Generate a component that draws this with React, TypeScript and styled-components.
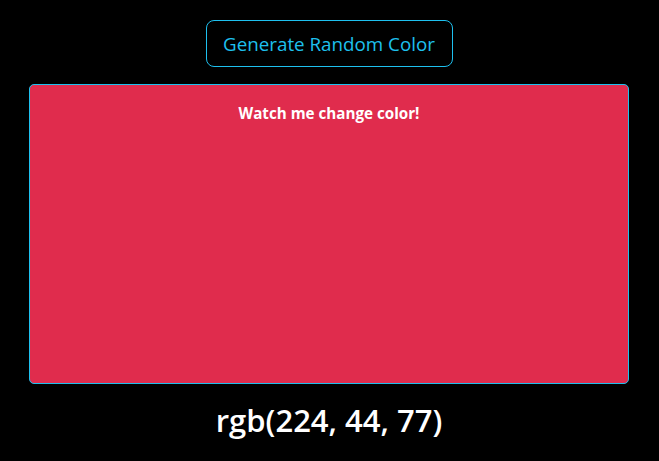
import React from "react";
import styled, { createGlobalStyle } from "styled-components";

const Global = createGlobalStyle`
  html, body { margin: 0; padding: 0; background: #000; }
  body { font-family: "Open Sans", "Noto Sans", sans-serif; color: #fff; }
`;

const Page = styled.div`
  display: flex;
  flex-direction: column;
  align-items: center;
  padding-top: 20px;
  padding-right: 1px;
`;

const Button = styled.button`
  height: 47px;
  width: 247px;
  padding: 0;
  background: #000;
  color: #1ec0ee;
  border: 1px solid #1ec0ee;
  border-radius: 8px;
  font-family: "Open Sans", "Noto Sans", sans-serif;
  font-size: 18.8px;
  cursor: pointer;
`;

const Swatch = styled.div<{ $bg: string }>`
  margin-top: 17px;
  width: 600px;
  height: 300px;
  box-sizing: border-box;
  background: ${(p) => p.$bg};
  border: 1px solid #1ec0ee;
  border-radius: 5px;
  display: flex;
  justify-content: center;
  padding-top: 18px;
`;

const Caption = styled.div`
  font-size: 15.2px;
  font-weight: 700;
  color: #fff;
`;

const Value = styled.div`
  margin-top: 15px;
  font-size: 31px;
  font-weight: 600;
  color: #fff;
`;

export default function App() {
  const color = "rgb(224, 44, 77)";
  return (
    <>
      <Global />
      <Page>
        <Button>Generate Random Color</Button>
        <Swatch $bg={color}>
          <Caption>Watch me change color!</Caption>
        </Swatch>
        <Value>{color}</Value>
      </Page>
    </>
  );
}
